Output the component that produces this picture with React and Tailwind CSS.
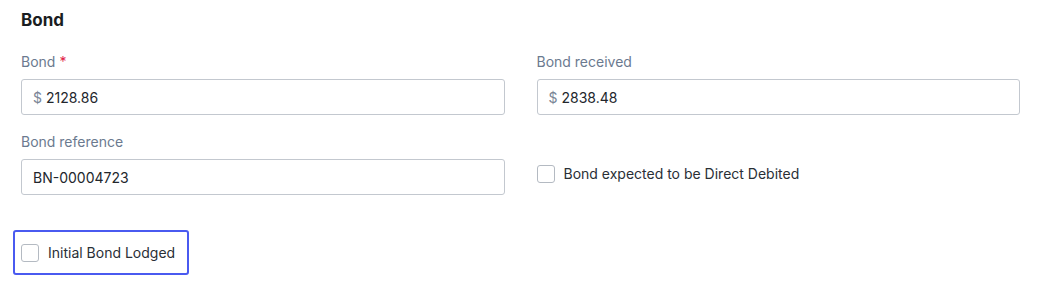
import React from 'react'

function Label({ children, required }) {
  return (
    <label className="block text-[14px] leading-5 text-[#6b7a8f] mb-[7px]">
      {children}
      {required && <span className="text-[#e11d48] ml-1">*</span>}
    </label>
  )
}

function Input({ prefix, value }) {
  return (
    <div className="flex items-center h-[36px] border border-[#c3c8cf] rounded-[3px] bg-white px-[11px] text-[14px]">
      {prefix && <span className="text-[#7a8596] mr-[4px]">{prefix}</span>}
      <span className="text-[#22262c]">{value}</span>
    </div>
  )
}

function Checkbox({ label }) {
  return (
    <div className="flex items-center gap-[9px]">
      <span className="w-[18px] h-[18px] border border-[#b4bac2] rounded-[3px] bg-white shrink-0" />
      <span className="text-[14px] text-[#2a2f36]">{label}</span>
    </div>
  )
}

export default function App() {
  return (
    <div className="w-[1040px] h-[286px] bg-white px-[21px] pt-[10px] font-['Inter',sans-serif]">
      <h2 className="text-[17px] font-bold text-[#1a1d21] leading-5 mb-[22px]">Bond</h2>
      <div className="grid grid-cols-2 gap-x-[32px] w-[999px]">
        <div>
          <Label required>Bond</Label>
          <Input prefix="$" value="2128.86" />
        </div>
        <div>
          <Label>Bond received</Label>
          <Input prefix="$" value="2838.48" />
        </div>
        <div className="mt-[17px]">
          <Label>Bond reference</Label>
          <Input value="BN-00004723" />
        </div>
        <div className="mt-[17px] flex items-center pt-[20px]">
          <Checkbox label="Bond expected to be Direct Debited" />
        </div>
      </div>
      <div className="mt-[35px] -ml-[8px] inline-flex items-center h-[45px] pl-[6px] pr-[12px] border-2 border-[#4a5af0] rounded-[3px]">
        <Checkbox label="Initial Bond Lodged" />
      </div>
    </div>
  )
}
